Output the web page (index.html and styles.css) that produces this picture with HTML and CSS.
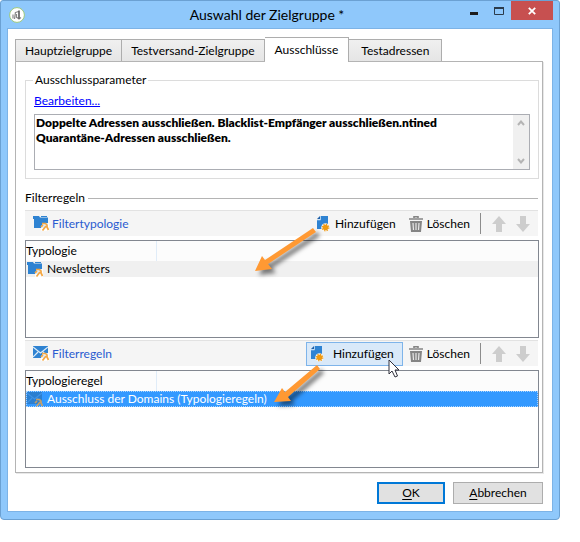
FILE: index.html
```html
<!DOCTYPE html>
<html lang="de">
<head>
<meta charset="utf-8">
<title>Auswahl der Zielgruppe</title>
<link rel="stylesheet" href="styles.css">
</head>
<body>
<svg class="symbols" width="0" height="0" aria-hidden="true">
  <symbol id="wrench" viewBox="0 0 9 9">
    <path d="M2 1.500h3.500l1.500 1.500v2l1.500 3M6 4l-3.500 4.500M3 3l-2 2" fill="none" stroke="#f6a740" stroke-width="1.700"/>
  </symbol>
  <symbol id="folder" viewBox="0 0 16 15">
    <path d="M0 0h6l1 1.500h8V12H1V3H0z" fill="#2f83d2"/>
    <path d="M8 .5h6" stroke="#2f83d2"/>
    <path d="M10 7h6v8H8v-4z" fill="#fff" opacity=".85"/>
    <use href="#wrench" x="7" y="6" width="9" height="9"/>
  </symbol>
  <symbol id="mail" viewBox="0 0 16 15">
    <path d="M0 0h15v12H0z" fill="#2f83d2"/>
    <path d="M0 1l7.500 6L15 1M0 11l5-5M15 11l-5-5" fill="none" stroke="#dcecf9" stroke-width="1.200"/>
    <path d="M10 7h6v8H8v-4z" fill="#fff" opacity=".85"/>
    <use href="#wrench" x="7" y="6" width="9" height="9"/>
  </symbol>
  <symbol id="mail-selected" viewBox="0 0 16 15">
    <path d="M0 0h15v12H0z" fill="#2b7fd0"/>
    <path d="M0 1l7.500 6L15 1M0 11l5-5M15 11l-5-5" fill="none" stroke="#3f93e6" stroke-width="1.200"/>
    <use href="#wrench" x="7" y="6" width="9" height="9" opacity=".75"/>
  </symbol>
  <symbol id="add" viewBox="0 0 14 16">
    <path d="M4 0h7v13H0V4h4z" fill="#2f83d2"/>
    <path d="M0 3l3-3v3z" fill="#1d5fa8"/>
    <path d="M3.500 0v4H0" fill="none" stroke="#9cc6ee" stroke-width=".8"/>
    <circle cx="8.500" cy="11.500" r="4.300" fill="#f5f5f5"/>
    <circle cx="8.500" cy="11.500" r="2.800" fill="#f09a10"/>
    <circle cx="8.500" cy="11.500" r="3.300" fill="none" stroke="#f09a10" stroke-width="1.200" stroke-dasharray="1.300 1.290"/>
  </symbol>
  <symbol id="trash" viewBox="0 0 14 16">
    <path d="M5 2V.7h4V2M0 3h14" fill="none" stroke="#858585" stroke-width="1.600"/>
    <path d="M1 5h12l-1 11H2z" fill="#858585"/>
    <path d="M4 7l.5 7M7 7v7M10 7l-.5 7" stroke="#e8e8e8" stroke-width="1.200"/>
  </symbol>
  <symbol id="up" viewBox="0 0 14 16">
    <path d="M7 0l7 8h-4v8H4V8H0z" fill="#cdcdcd"/>
  </symbol>
  <symbol id="down" viewBox="0 0 14 16">
    <path d="M7 16l7-8h-4V0H4v8H0z" fill="#cdcdcd"/>
  </symbol>
</svg>

<main class="dialog">
  <header class="titlebar">
    <svg class="app-icon" viewBox="0 0 16 16" aria-hidden="true">
      <circle cx="8" cy="8" r="7.400" fill="#fff" stroke="#9cc87c"/>
      <path d="M4 7.500v4M6.500 5l-1 7M6.500 5.500l3-1M7.500 7v4M8 10.500l2 1.500 2-1.500" fill="none" stroke="#888" stroke-width="1.200"/>
      <path d="M10 3.500v8" stroke="#333" stroke-width="1.300"/>
    </svg>
    <h1 class="title">Auswahl der Zielgruppe *</h1>
    <div class="window-controls">
      <button class="win-btn" aria-label="Minimieren"><svg class="minimize" width="8" height="3"><path d="M0 0h8v3H0z" fill="#1c1c1c"/></svg></button>
      <button class="win-btn" aria-label="Maximieren"><svg width="10" height="8"><path d="M.5 1.500h9v6h-9z" fill="none" stroke="#2b3b4b"/><path d="M0 0h10v2H0z" fill="#2b3b4b"/></svg></button>
      <button class="win-btn close" aria-label="Schließen"><svg width="8" height="8"><path d="M.8.8l6.400 6.400M7.200.8L.8 7.200" stroke="#fff" stroke-width="1.800"/></svg></button>
    </div>
  </header>

  <div class="client">
    <nav class="tabs" role="tablist">
      <button class="tab" role="tab">Hauptzielgruppe</button>
      <button class="tab" role="tab">Testversand-Zielgruppe</button>
      <button class="tab active" role="tab" aria-selected="true">Ausschlüsse</button>
      <button class="tab" role="tab">Testadressen</button>
    </nav>

    <section class="panel">
      <fieldset class="params">
        <legend>Ausschlussparameter</legend>
        <a class="edit" href="#">Bearbeiten...</a>
        <div class="memo">
          <textarea class="memo-text" aria-label="Ausschlussparameter" readonly>Doppelte Adressen ausschließen. Blacklist-Empfänger ausschließen.ntined
Quarantäne-Adressen ausschließen.</textarea>
          <div class="scrollbar" aria-hidden="true">
            <svg width="8" height="6"><path d="M1 5l3-3.500L7 5" fill="none" stroke="#b4b4b4" stroke-width="2"/></svg>
            <svg width="8" height="6"><path d="M1 1l3 3.500L7 1" fill="none" stroke="#b4b4b4" stroke-width="2"/></svg>
          </div>
        </div>
      </fieldset>

      <h2 class="divider">Filterregeln</h2>

      <div class="toolbar">
        <svg class="icon wide"><use href="#folder"/></svg>
        <span class="toolbar-title">Filtertypologie</span>
        <button class="tool add"><svg class="icon"><use href="#add"/></svg>Hinzufügen</button>
        <button class="tool"><svg class="icon"><use href="#trash"/></svg>Löschen</button>
        <span class="separator"></span>
        <button class="tool move" aria-label="Nach oben" disabled><svg class="icon"><use href="#up"/></svg></button>
        <button class="tool move" aria-label="Nach unten" disabled><svg class="icon"><use href="#down"/></svg></button>
      </div>
      <div class="list">
        <table>
          <thead><tr><th class="name">Typologie</th><th></th></tr></thead>
          <tbody><tr class="row"><td colspan="2"><div class="cell"><svg class="icon wide"><use href="#folder"/></svg>Newsletters</div></td></tr></tbody>
        </table>
      </div>

      <div class="toolbar">
        <svg class="icon wide"><use href="#mail"/></svg>
        <span class="toolbar-title">Filterregeln</span>
        <button class="tool add hover"><svg class="icon"><use href="#add"/></svg>Hinzufügen</button>
        <button class="tool"><svg class="icon"><use href="#trash"/></svg>Löschen</button>
        <span class="separator"></span>
        <button class="tool move" aria-label="Nach oben" disabled><svg class="icon"><use href="#up"/></svg></button>
        <button class="tool move" aria-label="Nach unten" disabled><svg class="icon"><use href="#down"/></svg></button>
      </div>
      <div class="list">
        <table>
          <thead><tr><th class="name">Typologieregel</th><th></th></tr></thead>
          <tbody><tr class="row selected"><td colspan="2"><div class="cell"><svg class="icon wide"><use href="#mail-selected"/></svg>Ausschluss der Domains (Typologieregeln)</div></td></tr></tbody>
        </table>
      </div>
    </section>

    <footer class="actions">
      <button class="btn primary"><u>O</u>K</button>
      <button class="btn"><u>A</u>bbrechen</button>
    </footer>
  </div>

  <svg class="pointer arrow-one" width="80" height="60" viewBox="0 0 80 60" aria-hidden="true">
    <path d="M5 46l7-15 3 4L63 3l3 4-48 32 4 5z" fill="#ff9933"/>
  </svg>
  <svg class="pointer arrow-two" width="64" height="56" viewBox="0 0 64 56" aria-hidden="true">
    <path d="M4 41l8-14 3 4L47 4l3 4-32 28 3 4z" fill="#ff9933"/>
  </svg>
  <svg class="pointer cursor" width="13" height="20" viewBox="0 0 13 20" aria-hidden="true">
    <path d="M1 1v14l3-3 3 6 2.500-1-2.500-6h4z" fill="#fff" stroke="#30303c"/>
  </svg>
</main>
</body>
</html>
```
FILE: styles.css
```css
* {
  box-sizing: border-box;
}

body {
  margin: 0;
  background: #fff;
  color: #000;
  font: 12px/16px Lato, "Open Sans", sans-serif;
}

button {
  margin: 0;
  padding: 0;
  border: 0;
  background: none;
  color: inherit;
  font: inherit;
}

svg {
  display: block;
  flex: none;
}

.symbols {
  position: absolute;
}

.dialog {
  position: relative;
  margin: 0 20px 22px 0;
  padding: 0 6px 7px;
  border: 1px solid #6ba1d3;
  border-radius: 3px 3px 4px 4px;
  background: #8fc8fb;
}

.titlebar {
  display: grid;
  grid-template-columns: 1fr auto 1fr;
  align-items: center;
  height: 27px;
}

.app-icon {
  width: 16px;
  height: 16px;
  margin-left: 2px;
}

.title {
  margin: 0 26px 0 0;
  font-size: 14px;
  font-weight: 400;
}

.window-controls {
  display: flex;
  align-self: start;
  justify-content: flex-end;
}

.win-btn {
  display: grid;
  place-items: center;
  width: 25px;
  height: 19px;
}

.minimize {
  margin-top: 5px;
}

.close {
  width: 42px;
  background: #c75050;
}

.client {
  padding: 8px 9px 7px 7px;
  border: 1px solid #7db3e6;
  background: #fff;
}

.tabs {
  display: flex;
  align-items: flex-end;
  height: 24px;
}

.tab {
  height: 22px;
  padding: 0 9px;
  border: 1px solid #adadad;
  border-bottom: 0;
  border-left-width: 0;
  background: linear-gradient(#f0f0f0, #e5e5e5);
}

.tab:first-child {
  border-left-width: 1px;
}

.tab:last-child {
  padding: 0 12px;
}

.tab.active {
  z-index: 1;
  height: 25px;
  margin-bottom: -1px;
  padding: 0 10px;
  background: #fff;
}

.panel {
  padding: 10px 3px 4px 9px;
  border: 1px solid #b4b4b4;
  box-shadow: 1px 1px #e8e8e8;
}

.params {
  min-width: 0;
  margin: 0;
  padding: 5px 8px 8px;
  border: 1px solid #dcdcdc;
}

.params legend {
  padding: 0 2px;
  margin-left: -1px;
}

.edit {
  color: #00f;
}

.memo {
  display: flex;
  height: 56px;
  margin-top: 5px;
  border: 1px solid #abadb3;
}

.memo-text {
  flex: 1;
  min-width: 0;
  padding: 0 1px;
  border: 0;
  outline: 0;
  overflow: hidden;
  resize: none;
  background: #fff;
  color: #000;
  font: 800 12px/15px Lato, "Open Sans", sans-serif;
}

.scrollbar {
  display: flex;
  flex-direction: column;
  justify-content: space-between;
  align-items: center;
  width: 16px;
  padding: 5px 0;
  background: #f0f0f0;
}

.divider {
  display: flex;
  align-items: center;
  gap: 3px;
  margin: 11px 1px 4px 0;
  font-size: 12px;
  font-weight: 400;
}

.divider::after {
  content: "";
  flex: 1;
  height: 1px;
  background: #b4b4b4;
}

.toolbar {
  display: flex;
  align-items: center;
  height: 26px;
  margin: 0 1px 4px 0;
  padding: 0 8px;
  border-top: 1px solid #e2e2e2;
  background: #f5f5f5;
}

.icon {
  width: 14px;
  height: 16px;
}

.icon.wide {
  width: 16px;
  height: 15px;
}

.toolbar-title {
  margin-left: 3px;
  color: #2a5bd0;
}

.tool {
  display: flex;
  align-items: center;
  gap: 4px;
  height: 24px;
  padding: 0 6px;
}

.add {
  margin-left: auto;
  border: 1px solid transparent;
}

.hover {
  gap: 8px;
  padding: 0 8px 0 4px;
  border-color: #7eb4ea;
  background: #d9e9f9;
}

.separator {
  width: 1px;
  height: 21px;
  margin: 0 6px 0 4px;
  background: #8c8c8c;
}

.move {
  padding: 0 5px;
}

.move:last-child {
  padding-right: 0;
}

.list {
  min-height: 98px;
  border: 1px solid #828790;
}

.list + .toolbar {
  margin-top: 2px;
}

table {
  width: 100%;
  border-collapse: collapse;
}

th,
td {
  padding: 0;
  text-align: left;
  font-weight: 400;
}

th {
  height: 20px;
  background: #fcfcfc;
}

.name {
  width: 130px;
  border-right: 1px solid #e0ecf8;
}

.cell {
  display: flex;
  align-items: center;
  gap: 4px;
  height: 16px;
  padding-left: 1px;
}

.row {
  background: #f0f0f0;
}

.selected {
  background: #3399ff;
  color: #fff;
}

.selected .cell {
  outline: 1px dotted #a8d4ff;
  outline-offset: -1px;
}

.actions {
  display: flex;
  justify-content: flex-end;
  gap: 8px;
  margin-top: 9px;
}

.btn {
  min-width: 90px;
  height: 22px;
  border: 1px solid #adadad;
  background: #e1e1e1;
}

.primary {
  min-width: 68px;
  border: 2px solid #0078d7;
}

.btn u {
  text-underline-offset: 2px;
}

.pointer {
  position: absolute;
}

.arrow-one,
.arrow-two {
  filter: drop-shadow(4px 4px 2px rgba(0, 0, 0, 0.5));
}

.arrow-one {
  top: 224px;
  left: 249px;
}

.arrow-two {
  top: 360px;
  left: 269px;
}

.cursor {
  top: 358px;
  left: 387px;
}
```
